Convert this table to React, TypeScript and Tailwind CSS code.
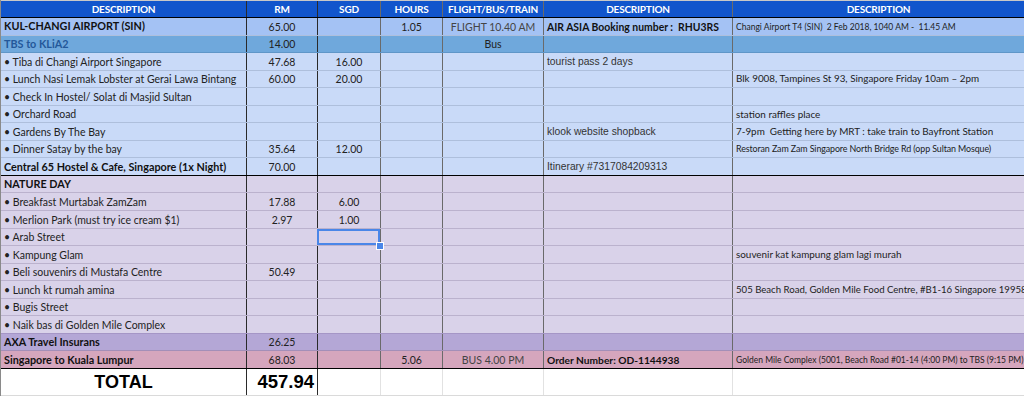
import React from "react";

type Kind = "plain" | "bold" | "arial" | "small" | "smallBold" | "boldNarrow" | "note" | "noteTight" | "noteMid";

type Cell = { t: string; k?: Kind; c?: string };

type Row = {
  bg: string;
  line: string;
  c: (Cell | string)[];
  bottom?: string;
  sel?: number;
};

// first column is 246px wide in total, 1px of it is the sheet edge on the container
const COLS = "grid-cols-[245px_71px_63px_62px_101px_189px_292px]";
const CENTER = [false, true, true, true, true, false, false];

const BLUE = "bg-[#c9daf8]";
const PURPLE = "bg-[#d9d2e9]";
const BL = "border-[#aebfdc]";
const PL = "border-[#bbb2cd]";

const rows: Row[] = [
  {
    bg: "bg-[#a4c2f4]",
    line: BL,
    c: [
      { t: "KUL-CHANGI AIRPORT (SIN)", k: "bold" },
      "65.00",
      "",
      "1.05",
      { t: "FLIGHT 10.40 AM", c: "text-[#444]" },
      { t: "AIR ASIA Booking number :  RHU3RS", k: "boldNarrow" },
      { t: "Changi Airport T4 (SIN)  2 Feb 2018, 1040 AM -  11.45 AM", k: "small" },
    ],
  },
  {
    bg: "bg-[#6fa8dc]",
    line: "border-[#5f96c8]",
    c: [{ t: "TBS to KLiA2", k: "bold", c: "text-[#24589a]" }, "14.00", "", "", "Bus", "", ""],
  },
  { bg: BLUE, line: BL, c: ["• Tiba di Changi Airport Singapore", "47.68", "16.00", "", "", { t: "tourist pass 2 days", k: "arial" }, ""] },
  {
    bg: BLUE,
    line: BL,
    c: ["• Lunch Nasi Lemak Lobster at Gerai Lawa Bintang", "60.00", "20.00", "", "", "", "Blk 9008, Tampines St 93, Singapore Friday 10am – 2pm"],
  },
  { bg: BLUE, line: BL, c: ["• Check In Hostel/ Solat di Masjid Sultan", "", "", "", "", "", ""] },
  { bg: BLUE, line: BL, c: ["• Orchard Road", "", "", "", "", "", "station raffles place"] },
  {
    bg: BLUE,
    line: BL,
    c: ["• Gardens By The Bay", "", "", "", "", { t: "klook website shopback", k: "arial" }, "7-9pm  Getting here by MRT : take train to Bayfront Station"],
  },
  {
    bg: BLUE,
    line: BL,
    c: [
      "• Dinner Satay by the bay",
      "35.64",
      "12.00",
      "",
      "",
      "",
      { t: "Restoran Zam Zam Singapore North Bridge Rd (opp Sultan Mosque)", k: "noteTight" },
    ],
  },
  {
    bg: BLUE,
    line: BL,
    bottom: "border-black",
    c: [{ t: "Central 65 Hostel & Cafe, Singapore (1x Night)", k: "bold" }, "70.00", "", "", "", { t: "Itinerary #7317084209313", k: "arial" }, ""],
  },
  { bg: PURPLE, line: PL, c: [{ t: "NATURE DAY", k: "bold", c: "text-[#3d2e96]" }, "", "", "", "", "", ""] },
  { bg: PURPLE, line: PL, c: ["• Breakfast Murtabak ZamZam", "17.88", "6.00", "", "", "", ""] },
  { bg: PURPLE, line: PL, c: ["• Merlion Park (must try ice cream $1)", "2.97", "1.00", "", "", "", ""] },
  { bg: PURPLE, line: PL, sel: 2, c: ["• Arab Street", "", "", "", "", "", ""] },
  { bg: PURPLE, line: PL, c: ["• Kampung Glam", "", "", "", "", "", "souvenir kat kampung glam lagi murah"] },
  { bg: PURPLE, line: PL, c: ["• Beli souvenirs di Mustafa Centre", "50.49", "", "", "", "", ""] },
  {
    bg: PURPLE,
    line: PL,
    c: [
      "• Lunch kt rumah amina",
      "",
      "",
      "",
      "",
      "",
      { t: "505 Beach Road, Golden Mile Food Centre, #B1-16 Singapore 199583", k: "noteMid" },
    ],
  },
  { bg: PURPLE, line: PL, c: ["• Bugis Street", "", "", "", "", "", ""] },
  { bg: PURPLE, line: "border-[#a596c6]", c: ["• Naik bas di Golden Mile Complex", "", "", "", "", "", ""] },
  { bg: "bg-[#b4a7d6]", line: "border-[#a38fb8]", c: [{ t: "AXA Travel Insurans", k: "bold" }, "26.25", "", "", "", "", ""] },
  {
    bg: "bg-[#d5a6bd]",
    line: PL,
    bottom: "border-black",
    c: [
      { t: "Singapore to Kuala Lumpur", k: "bold", c: "text-[#2a1018]" },
      "68.03",
      "",
      "5.06",
      { t: "BUS 4.00 PM", c: "text-[#444]" },
      { t: "Order Number: OD-1144938", k: "smallBold" },
      { t: "Golden Mile Complex (5001, Beach Road #01-14 (4:00 PM) to TBS (9:15 PM)", k: "small" },
    ],
  },
];

const HEAD = ["DESCRIPTION", "RM", "SGD", "HOURS", "FLIGHT/BUS/TRAIN", "DESCRIPTION", "DESCRIPTION"];

const CAL = "font-['Lato','Open_Sans',sans-serif]";
const ARIAL = "font-['Liberation_Sans',Arial,sans-serif]";

function kindClass(k: Kind) {
  switch (k) {
    case "bold":
      return `${CAL} font-bold text-[10.8px] text-[#111]`;
    case "boldNarrow":
      return `${CAL} font-bold text-[10.4px] text-[#111]`;
    case "arial":
      return `${ARIAL} text-[10.3px] text-[#333]`;
    case "small":
      return `${CAL} text-[8.5px] text-[#222]`;
    case "smallBold":
      return `${CAL} font-bold text-[10.2px] text-[#111]`;
    case "note":
      return `${CAL} text-[9.9px] text-[#222]`;
    case "noteMid":
      return `${CAL} text-[9.6px] text-[#222]`;
    case "noteTight":
      return `${CAL} text-[8.9px] tracking-[-0.1px] text-[#222]`;
    default:
      return `${CAL} text-[10.5px] text-[#222]`;
  }
}

// vertical column dividers: the first two are black, the rest are grey
function divider(i: number) {
  if (i === 0) return "";
  if (i <= 2) return "border-l border-[#2a2a2a]";
  return "border-l border-[#6a6a6a]";
}

function SheetRow({ row }: { row: Row }) {
  return (
    <div className={`grid ${COLS} h-[17.55px] border-b ${row.bottom ?? row.line} ${row.bg}`}>
      {row.c.map((raw, i) => {
        const cell: Cell = typeof raw === "string" ? { t: raw, k: i === 6 ? "note" : "plain" } : raw;
        const k = cell.k ?? "plain";
        return (
          <div
            key={i}
            className={`relative flex items-center whitespace-pre px-[3px] pt-[1px] ${divider(i)} ${
              CENTER[i] ? "justify-center" : "justify-start"
            } ${i === 0 ? "pl-[3px]" : ""} ${row.sel === i ? "" : "overflow-hidden"}`}
          >
            <span className={`${kindClass(k)} ${cell.c ?? ""} leading-none`}>{cell.t}</span>
            {row.sel === i ? (
              <>
                <span className="pointer-events-none absolute inset-0 -left-px border-2 border-[#4a86e8]" />
                <span className="absolute right-[-3px] bottom-[-4px] z-10 h-[6px] w-[6px] bg-[#4a86e8] outline outline-1 outline-white" />
              </>
            ) : null}
          </div>
        );
      })}
    </div>
  );
}

export default function App() {
  return (
    <div className="h-[397px] w-[1024px] overflow-hidden bg-white">
      <div className="border-l border-[#8a8a8a]">
        <div className={`grid ${COLS} h-[18px] border-t border-b border-t-[#c8c8c8] border-b-black bg-[#1155cc]`}>
          {HEAD.map((h, i) => (
            <div
              key={i}
              className={`flex items-center justify-center ${divider(i)} ${CAL} text-[10px] font-bold leading-none tracking-[-0.2px] text-white`}
            >
              {h}
            </div>
          ))}
        </div>
        {rows.map((r, i) => (
          <SheetRow key={i} row={r} />
        ))}
        <div className={`grid ${COLS} h-[27px] border-b border-[#dadada]`}>
          <div className="flex items-center justify-center pt-[1px] font-['Liberation_Sans',Arial,sans-serif] text-[18px] font-bold leading-none text-black">
            TOTAL
          </div>
          <div className="flex items-center justify-end border-l border-[#2a2a2a] pr-[3px] pt-[1px] font-['Liberation_Sans',Arial,sans-serif] text-[18.5px] font-bold leading-none text-black">
            457.94
          </div>
          <div className="border-l border-[#2a2a2a]" />
          <div className="border-l border-[#e2e2e2]" />
          <div className="border-l border-[#e2e2e2]" />
          <div className="border-l border-[#e2e2e2]" />
          <div className="border-l border-[#e2e2e2]" />
        </div>
      </div>
    </div>
  );
}
